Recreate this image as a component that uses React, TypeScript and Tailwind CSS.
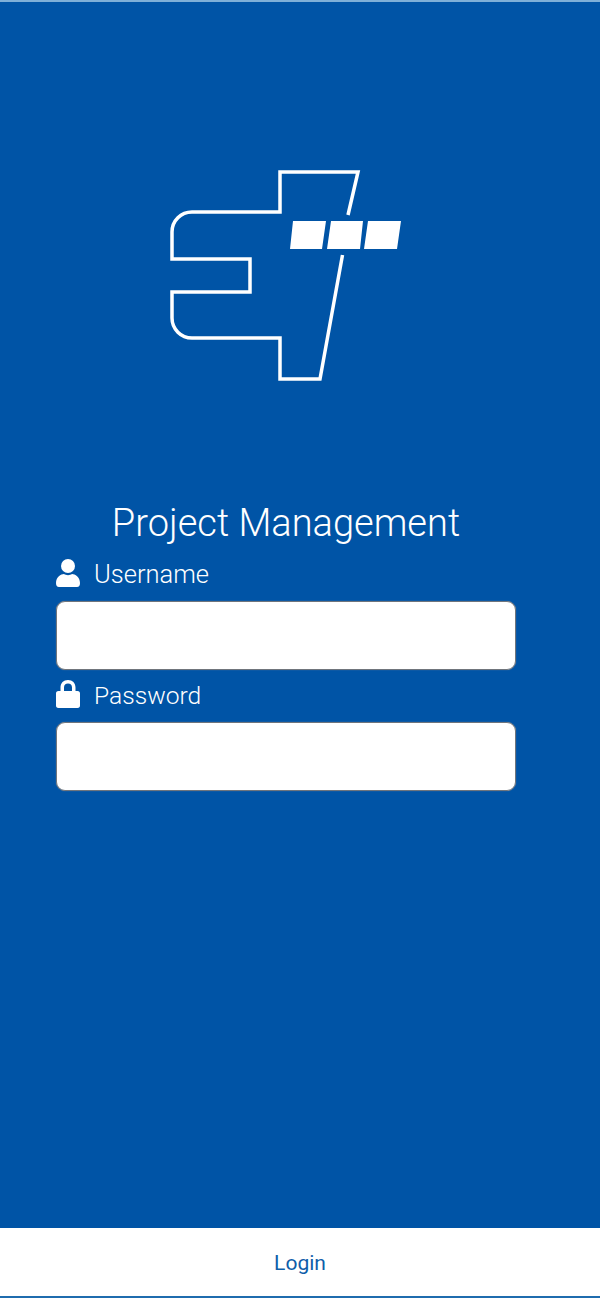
export default function App() {
  return (
    <div className="flex h-[1299px] w-[600px] flex-col overflow-hidden bg-[#0054a6] font-['Roboto',sans-serif]">
      <div className="h-[2px] bg-[#7fb0d8]" />
      <main className="flex w-[516px] flex-1 flex-col pl-[56px]">
        <svg className="ml-[114px] mt-[168px] h-[214px] w-[232px]" viewBox="170 170 232 214" fill="none">
          <path
            d="M348 215 L358 172 H280 V212 H192 A20 20 0 0 0 172 232 V259 H250 V292 H172 V318 A20 20 0 0 0 192 338 H280 V379 H320 L342.500 255"
            stroke="#fff"
            strokeWidth="3.5"
          />
          <path d="M293 221H326L322 249H290Z M331 221H363L360 249H327Z M368 221H401L397 249H364Z" fill="#fff" />
        </svg>
        <h1 className="mt-[116px] text-center text-[38px] font-light leading-[46px] text-white">Project Management</h1>
        <div className="mt-[11px] flex h-[36px] items-center gap-[14px]">
          <svg className="mb-[4px] h-[28px] w-[24px]" viewBox="0 0 24 28" fill="#fff">
            <circle cx="12" cy="7" r="7" />
            <path d="M0 24C0 18 5 15 8 15C10 16.500 14 16.500 16 15C19 15 24 18 24 24C24 26.500 23 28 21 28H3C1 28 0 26.500 0 24Z" />
          </svg>
          <span className="mb-[2px] text-[25.500px] font-light text-white">Username</span>
        </div>
        <input className="mt-[8px] h-[69px] w-[460px] rounded-[9px] border border-[#70757c] bg-white shadow-[0_0_1px_#8a8f96]" />
        <div className="mt-[8px] flex h-[36px] items-center gap-[14px]">
          <svg className="mb-[4px] h-[28px] w-[24px]" viewBox="0 0 24 28" fill="#fff">
            <path fillRule="evenodd" d="M4.500 11V7.500C4.500 3 7.500 0 12 0C16.500 0 19.500 3 19.500 7.500V11H21.500C23.300 11 24 12 24 13.500V25.500C24 27 23.300 28 21.500 28H2.500C0.700 28 0 27 0 25.500V13.500C0 12 0.700 11 2.500 11ZM8 11H16V7.500C16 5 14.500 3.500 12 3.500C9.500 3.500 8 5 8 7.500Z" />
          </svg>
          <span className="text-[24.600px] font-light text-white">Password</span>
        </div>
        <input className="mt-[8px] h-[69px] w-[460px] rounded-[9px] border border-[#70757c] bg-white shadow-[0_0_1px_#8a8f96]" />
      </main>
      <footer className="flex h-[71px] flex-col bg-white">
        <button className="h-[68px] pt-[3px] text-[21px] text-[#0f5ea9]">Login</button>
        <div className="h-[2px] bg-[#1f6cae]" />
      </footer>
    </div>
  );
}
